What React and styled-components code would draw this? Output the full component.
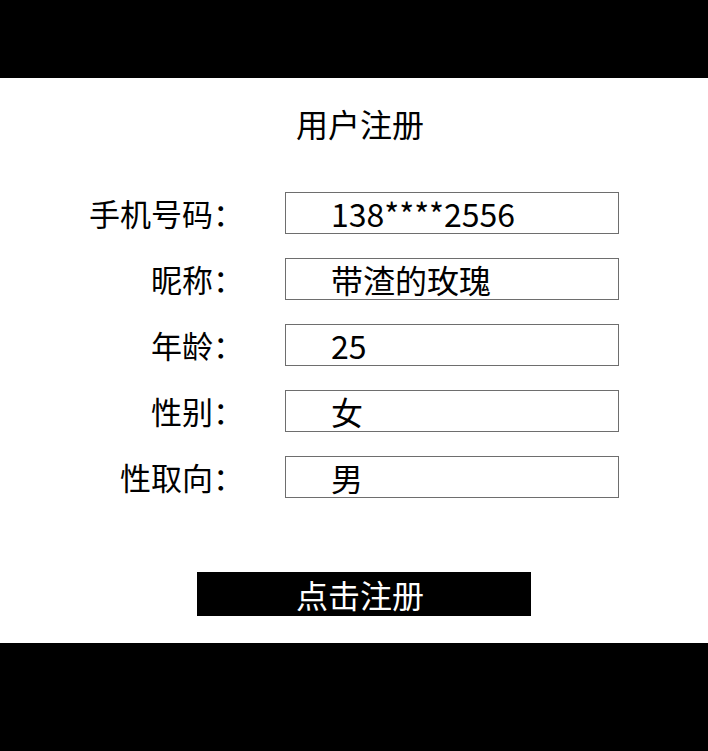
import styled, { createGlobalStyle } from "styled-components";

const GlobalStyle = createGlobalStyle`
  html, body {
    margin: 0;
    padding: 0;
    background: #000;
  }
  body {
    font-family: "Noto Sans CJK SC", "Noto Sans", sans-serif;
  }
`;

const fields = [
  { label: "手机号码：", value: "138****2556" },
  { label: "昵称：", value: "带渣的玫瑰" },
  { label: "年龄：", value: "25" },
  { label: "性别：", value: "女" },
  { label: "性取向：", value: "男" },
];

export default function App() {
  return (
    <>
      <GlobalStyle />
      <Screen>
        <Bar $height="78px" />
        <Panel>
          <Title>用户注册</Title>
          <Form>
            {fields.map((f) => (
              <Row key={f.label}>
                <Label>{f.label}</Label>
                <Field>{f.value}</Field>
              </Row>
            ))}
          </Form>
          <SubmitButton type="button">点击注册</SubmitButton>
        </Panel>
        <Bar $grow />
      </Screen>
    </>
  );
}

const Screen = styled.div`
  display: flex;
  flex-direction: column;
  min-height: 100vh;
  background: #000;
`;

const Bar = styled.div`
  background: #000;
  height: ${(p) => p.$height || "auto"};
  flex: ${(p) => (p.$grow ? "1" : "none")};
`;

const Panel = styled.div`
  background: #fff;
  height: 565px;
  display: flex;
  flex-direction: column;
  box-sizing: border-box;
  padding-top: 24px;
`;

const Title = styled.h1`
  margin: 0;
  padding-left: 12px;
  text-align: center;
  font-size: 32px;
  font-weight: 400;
  line-height: 42px;
  color: #000;
`;

const Form = styled.div`
  margin-top: 48px;
  display: flex;
  flex-direction: column;
  gap: 24px;
`;

const Row = styled.div`
  display: grid;
  grid-template-columns: 244px 334px;
  column-gap: 41px;
  align-items: center;
  height: 42px;
`;

const Label = styled.div`
  text-align: right;
  font-size: 31px;
  line-height: 42px;
  color: #000;
`;

const Field = styled.div`
  box-sizing: border-box;
  height: 42px;
  border: 1px solid #6e6e6e;
  padding-left: 45px;
  display: flex;
  align-items: center;
  font-size: 32px;
  color: #000;
`;

const SubmitButton = styled.button`
  margin: 74px 0 0 197px;
  width: 334px;
  height: 44px;
  border: none;
  border-radius: 0;
  background: #000;
  color: #fff;
  font-family: inherit;
  font-size: 32px;
  line-height: 44px;
  padding: 0 8px 0 0;
  cursor: pointer;
`;
